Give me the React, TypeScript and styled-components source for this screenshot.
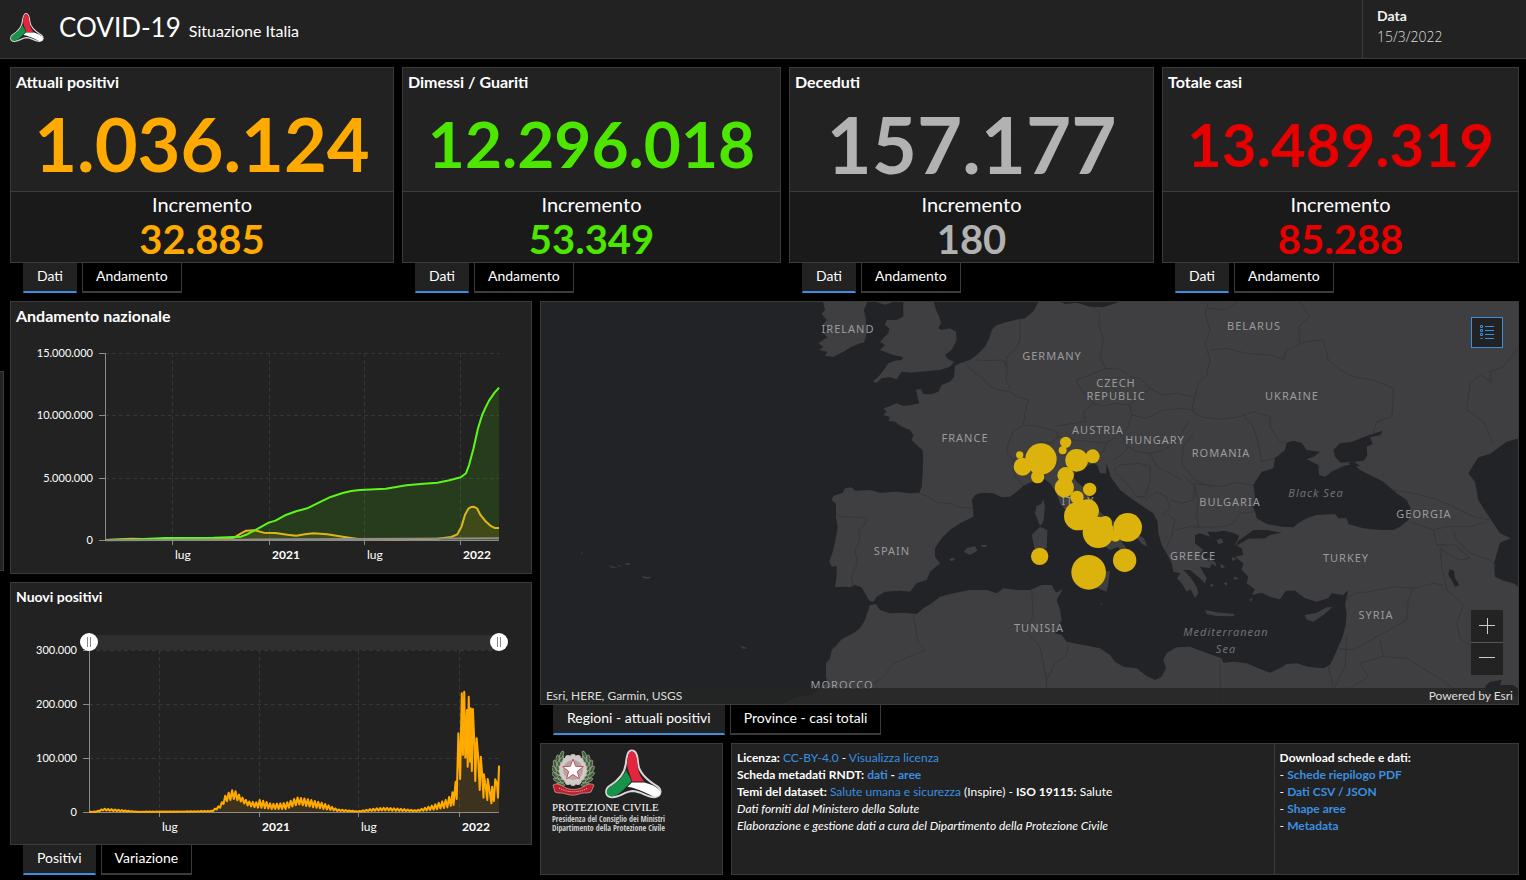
import React from "react";
import styled, { createGlobalStyle } from "styled-components";

const line = "#3b3b3b";
const panel = "#222222";
const blue = "#3a8fe0";

const Global = createGlobalStyle`
  * { box-sizing: border-box; }
  body { margin: 0; background: #000; color: #fff; font-family: Lato, "Open Sans", sans-serif; }
  h1, h2, h3, p, ul { margin: 0; padding: 0; font-weight: inherit; }
  button { font: inherit; color: inherit; cursor: pointer; }
  svg { display: block; }
`;

const Page = styled.div`
  position: relative;
  min-height: 100vh;
  display: flex;
  flex-direction: column;
`;

const Header = styled.header`
  display: flex;
  height: 59px;
  background: ${panel};
  border-bottom: 1px solid ${line};
`;

const Brand = styled.div`
  flex: 1;
  display: flex;
  align-items: center;
  gap: 15px;
  padding: 0 10px 4px;
`;

const Heading = styled.h1`
  padding-top: 3px;
  font-size: 26px;
  line-height: 32px;
  small { font-size: 16px; margin-left: 8px; }
`;

const DateBox = styled.div`
  width: 164px;
  border-left: 1px solid ${line};
  padding: 5px 14px;
  font-size: 14px;
  line-height: 21px;
  font-weight: 700;
  color: #f2f2f2;
  time { display: block; font-family: "Open Sans", sans-serif; font-weight: 300; color: #ddd; }
`;

const KpiRow = styled.section`
  display: grid;
  grid-template-columns: 384fr 379fr 365fr 357fr;
  gap: 8px;
  padding: 8px 7px 8px 10px;
`;

const Column = styled.div`
  display: flex;
  flex-direction: column;
  min-width: 0;
`;

const Panel = styled.article`
  background: ${panel};
  border: 1px solid ${line};
`;

const Title = styled.h2<{ $small?: boolean }>`
  font-size: ${(p) => (p.$small ? 14 : 16)}px;
  line-height: 18px;
  font-weight: 700;
  padding: 5px 5px 1px;
`;

const KpiTop = styled.div`
  height: 123px;
`;

const BigNumber = styled.p<{ $color: string; $size: number }>`
  color: ${(p) => p.$color};
  font-size: ${(p) => p.$size}px;
  line-height: 104px;
  height: 99px;
  font-weight: 700;
  text-align: center;
`;

const KpiBottom = styled.div<{ $color: string }>`
  height: 71px;
  background: #1a1a1a;
  border-top: 1px solid ${line};
  text-align: center;
  h3 { font-size: 20px; line-height: 24px; }
  p { font-size: 40px; line-height: 46px; font-weight: 700; color: ${(p) => p.$color}; }
`;

const TabList = styled.div`
  display: flex;
  gap: 5px;
  padding-left: 13px;
`;

const Tab = styled.button<{ $active?: boolean }>`
  position: relative;
  height: 30px;
  padding: 0 13px 3px;
  font-size: 14px;
  line-height: 24px;
  background: ${(p) => (p.$active ? panel : "#000")};
  border: 1px solid ${(p) => (p.$active ? panel : line)};
  border-top: 0;
  border-bottom: 2px solid ${(p) => (p.$active ? blue : line)};
`;

const Main = styled.main`
  flex: 1;
  display: grid;
  grid-template-columns: 522fr 979fr;
  gap: 8px;
  padding: 0 7px 5px 10px;
`;

const ChartPanel = styled(Panel)<{ $grow?: boolean }>`
  flex: ${(p) => (p.$grow ? 1 : 0)} 0 auto;
  & + & { margin-top: 8px; }
`;

const ChartSvg = styled.svg`
  width: 100%;
  height: auto;
  overflow: visible;
  font-size: 12px;
  fill: #fff;
  .value { font-size: 11px; }
  .tick { stroke: #8a8a8a; }
  .grid { stroke: #363636; stroke-dasharray: 4 3; }
  .year { font-weight: 700; }
`;

const RangeBox = styled.div`
  position: relative;
  height: 18px;
  margin: 26px 23px 0 69px;
  &::before {
    content: "";
    position: absolute;
    inset: 2px 9px 1px;
    background: #2f2f2f;
  }
`;

const Thumb = styled.input`
  position: absolute;
  inset: 0;
  width: 100%;
  height: 18px;
  margin: 0;
  appearance: none;
  background: transparent;
  pointer-events: none;
  &::-webkit-slider-thumb {
    appearance: none;
    pointer-events: auto;
    width: 18px;
    height: 18px;
    border-radius: 50%;
    background:
      linear-gradient(#888, #888) 7px 4px / 1px 10px no-repeat,
      linear-gradient(#888, #888) 10px 4px / 1px 10px no-repeat,
      #fff;
  }
`;

const MapPanel = styled(Panel)`
  position: relative;
  flex: 1 1 404px;
  min-height: 404px;
  overflow: hidden;
  background: #222327;
`;

const MapSvg = styled.svg`
  position: absolute;
  inset: 0;
  width: 100%;
  height: 100%;
  font-family: "Noto Sans", sans-serif;
  font-size: 11px;
  letter-spacing: 1px;
  fill: #9b9b9d;
  text-anchor: middle;
  .sea { font-style: italic; fill: #6f7073; }
`;

const Attribution = styled.div`
  position: absolute;
  inset: auto 0 0;
  display: flex;
  justify-content: space-between;
  padding: 0 5px;
  font-size: 12px;
  line-height: 16px;
  color: #ddd;
  background: rgba(36, 36, 36, 0.8);
`;

const LegendButton = styled.button`
  position: absolute;
  top: 15px;
  right: 15px;
  width: 32px;
  height: 31px;
  padding: 0;
  display: grid;
  place-items: center;
  background: #222;
  border: 1px solid ${blue};
`;

const ZoomBox = styled.div`
  position: absolute;
  right: 15px;
  bottom: 29px;
  display: grid;
  gap: 1px;
  background: #555;
  button {
    width: 32px;
    height: 32px;
    border: 0;
    padding: 0;
    display: grid;
    place-items: center;
    background: #232323;
  }
`;

const Footer = styled.footer`
  display: grid;
  grid-template-columns: 183fr 788fr;
  gap: 8px;
  margin-top: 8px;
  height: 132px;
`;

const LogoPanel = styled(Panel)`
  padding: 5px 11px;
`;

const LogoMarks = styled.div`
  display: flex;
  align-items: flex-start;
  gap: 10px;
`;

const LogoName = styled.div`
  font-family: "Liberation Serif", serif;
  font-size: 11px;
  line-height: 14px;
  white-space: nowrap;
  margin-top: 1px;
`;

const LogoSub = styled.div`
  font-family: "Liberation Sans Narrow", "Open Sans Condensed", "Liberation Sans", sans-serif;
  font-size: 8px;
  line-height: 9px;
  color: #ccc;
  white-space: nowrap;
`;

const InfoPanel = styled(Panel)`
  display: grid;
  grid-template-columns: 543fr 245fr;
  font-size: 12px;
  line-height: 17px;
  a { color: ${blue}; text-decoration: none; }
  ul { list-style: none; }
`;

const InfoCell = styled.div`
  padding: 5px 5px;
  & + & { border-left: 1px solid ${line}; }
`;

const SideHandle = styled.button`
  position: absolute;
  left: 0;
  top: 371px;
  width: 4px;
  height: 200px;
  padding: 0;
  background: ${panel};
  border: 1px solid ${line};
  border-left: 0;
`;

const kpis = [
  { title: "Attuali positivi", value: "1.036.124", inc: "32.885", color: "#ffaa00", size: 74 },
  { title: "Dimessi / Guariti", value: "12.296.018", inc: "53.349", color: "#4ce600", size: 64 },
  { title: "Deceduti", value: "157.177", inc: "180", color: "#b2b2b2", size: 78 },
  { title: "Totale casi", value: "13.489.319", inc: "85.288", color: "#e60000", size: 60 },
];

function Triskele({ width, height }: { width: number; height: number }) {
  return (
    <svg width={width} height={height} viewBox="182 16 170 148" aria-hidden="true">
      <path d="M262 20C250 20 247 35 244 60C241 85 225 108 195 126C181 136 182 158 202 159C224 161 240 142 265 141C290 142 310 161 330 159C351 157 352 136 338 127C310 110 284 90 281 60C279 35 275 20 262 20Z" fill="#222" stroke="#d8d8d8" strokeWidth="6" />
      <path d="M262 22C252 22 249 40 248 60C249 85 262 98 262 112L299 112C286 95 279 80 279 60C277 38 272 22 262 22Z" fill="#e4253f" />
      <path d="M245 78C238 98 215 118 195 129C183 138 185 157 202 157C228 153 244 128 260 113C260 100 249 92 245 78Z" fill="#17934a" />
      <path d="M262 115L300 115C316 119 347 131 347 146C346 156 335 159 325 156C305 148 285 134 249 128Z" fill="#fff" />
    </svg>
  );
}

function Emblem() {
  const star = Array.from({ length: 10 }, (_, i) => {
    const r = i % 2 ? 4.5 : 11;
    const a = (Math.PI / 5) * i - Math.PI / 2;
    return `${21 + r * Math.cos(a)},${21 + r * Math.sin(a)}`;
  }).join(" ");
  const teeth = Array.from({ length: 16 }, (_, i) => (Math.PI / 8) * i);
  const leaves = Array.from({ length: 13 }, (_, i) => 0.7 + i * 0.15);
  return (
    <svg width="43" height="48" viewBox="0 0 43 48" aria-hidden="true">
      {teeth.map((a) => (
        <circle key={a} cx={21 + 13 * Math.cos(a)} cy={21 + 13 * Math.sin(a)} r="3" fill="#cfc8c6" />
      ))}
      <circle cx="21" cy="21" r="13" fill="#d2cbc9" />
      <circle cx="21" cy="21" r="10" fill="#b3a3a1" />
      {[-1, 1].map((s) =>
        leaves.map((t, i) => {
          const a = Math.PI / 2 + s * t;
          const r = i % 2 ? 16 : 19;
          const x = 21 + r * Math.cos(a);
          const y = 21 + r * Math.sin(a);
          return (
            <g key={`${s}${t}`} transform={`translate(${x} ${y}) rotate(${(a * 180) / Math.PI + 60 * s})`}>
              <ellipse rx="4" ry="1.6" fill="#3f5f38" stroke="#b5bfa9" strokeWidth="0.6" />
            </g>
          );
        })
      )}
      <polygon points={star} fill="#fff" stroke="#c6525c" strokeWidth="1" />
      <path d="M1 36C6 33 10 37 14 39C19 41 24 41 29 39C33 37 37 33 42 36L39 43C34 45 31 43 27 45C22 47 18 46 14 45C10 43 7 45 3 43Z" fill="#b8202d" stroke="#e5a5a5" strokeWidth="0.7" />
      <path d="M7 39C16 44 27 44 36 39" stroke="#f0c4c4" strokeWidth="1" strokeDasharray="1 1" fill="none" />
    </svg>
  );
}

type AxisProps = {
  left: number;
  bottom: number;
  ys: [number, string][];
  xs: [number, string][];
};

function Axes({ left, bottom, ys, xs }: AxisProps) {
  return (
    <g>
      {xs.map(([x]) => (
        <line key={x} className="grid" x1={x + 0.5} x2={x + 0.5} y1={ys[0][0]} y2={bottom} />
      ))}
      {ys.slice(0, -1).map(([y]) => (
        <line key={y} className="grid" x1={left} x2="488" y1={y + 0.5} y2={y + 0.5} />
      ))}
      {ys.map(([y, label]) => (
        <g key={label}>
          <line className="tick" x1={left - 6} x2={left} y1={y + 0.5} y2={y + 0.5} />
          <text className="value" x={left - 12} y={y + 4} textAnchor="end">{label}</text>
        </g>
      ))}
      {xs.map(([x, label]) => (
        <g key={x}>
          <line className="tick" x1={x + 0.5} x2={x + 0.5} y1={bottom} y2={bottom + 5} />
          <text x={x + 3} y={bottom + 19} className={label === "lug" ? "" : "year"}>{label}</text>
        </g>
      ))}
      <line className="tick" x1={left + 0.5} x2={left + 0.5} y1={ys[0][0]} y2={bottom} />
      <line className="tick" x1={left} x2="488" y1={bottom + 0.5} y2={bottom + 0.5} />
    </g>
  );
}

const healed = "307,720 400,718 480,714 620,713 700,710 720,702 745,688 780,668 800,662 830,645 860,634 895,624 930,606 960,591 995,579 1020,573 1045,570 1120,566 1180,556 1230,551 1270,548 1305,541 1338,532 1353,520 1362,495 1375,445 1388,385 1400,345 1410,322 1420,302 1436,278 1449,263";
const current = "307,720 380,716 450,718 620,718 680,713 700,700 715,692 740,691 765,698 800,699 835,704 860,707 885,703 910,700 950,703 1000,711 1040,717 1150,718 1270,716 1310,711 1328,703 1340,680 1350,645 1360,626 1368,621 1375,620 1385,625 1395,645 1410,664 1425,678 1436,684 1449,684";

function NationalChart() {
  return (
    <ChartSvg viewBox="0 0 520 247" role="img" aria-label="Andamento nazionale">
      <Axes
        left={94}
        bottom={214}
        ys={[[27, "15.000.000"], [89, "10.000.000"], [152, "5.000.000"], [214, "0"]]}
        xs={[[161, "lug"], [258, "2021"], [353, "lug"], [449, "2022"]]}
      />
      <g transform="translate(-11 -26) scale(0.3444 0.3333)" strokeWidth="6" strokeLinejoin="round">
        <polygon points={`${current} 1449,720 307,720`} fill="#ffaa00" fillOpacity="0.13" />
        <polyline points={current} fill="none" stroke="#f0b020" />
        <polygon points={`${healed} 1449,720 307,720`} fill="#4ce600" fillOpacity="0.13" />
        <polyline points={healed} fill="none" stroke="#5cf51c" />
        <polyline points="307,721 700,719 1449,715" fill="none" stroke="#8c8c8c" />
      </g>
    </ChartSvg>
  );
}

const envelope = [
  [259, 711, 711], [280, 709, 711], [300, 701, 706], [330, 703, 708], [400, 710, 711], [560, 709, 710],
  [615, 707, 710], [640, 690, 698], [655, 660, 680], [678, 643, 672], [700, 665, 680], [720, 679, 692],
  [745, 682, 698], [755, 674, 698], [790, 687, 702], [830, 684, 702], [865, 667, 688], [900, 674, 695],
  [940, 685, 702], [980, 703, 708], [1040, 709, 710], [1075, 702, 708], [1120, 698, 706], [1160, 701, 708],
  [1210, 706, 709], [1260, 690, 704], [1300, 672, 697], [1315, 650, 690],
];

function weeklySeries() {
  const pts: string[] = [];
  for (let x = 259, i = 0; x < 1315; x += 5, i++) {
    const k = envelope.findIndex((e) => e[0] > x);
    const a = envelope[k - 1];
    const b = envelope[k];
    const t = (x - a[0]) / (b[0] - a[0]);
    const c = i % 2 ? 1 : 2;
    pts.push(`${x},${a[c] + (b[c] - a[c]) * t}`);
  }
  return pts.join(" ");
}

const newCases = `${weeklySeries()} 1317,690 1323,620 1326,672 1331,475 1336,612 1341,355 1344,540 1348,350 1351,548 1356,405 1358,575 1361,365 1365,560 1367,400 1370,588 1373,402 1378,520 1380,618 1384,490 1388,540 1393,645 1396,545 1400,600 1404,668 1405,598 1411,640 1415,675 1416,612 1422,650 1427,685 1429,635 1434,678 1438,613 1443,625 1446,668 1449,572`;

function DailyChart() {
  return (
    <ChartSvg viewBox="0 0 520 192" role="img" aria-label="Nuovi positivi">
      <Axes
        left={78}
        bottom={161}
        ys={[[-1, "300.000"], [53, "200.000"], [107, "100.000"], [161, "0"]]}
        xs={[[148, "lug"], [248, "2021"], [347, "lug"], [448, "2022"]]}
      />
      <g transform="translate(-11 -76) scale(0.3444 0.3333)" strokeLinejoin="round">
        <polygon points={`${newCases} 1449,712 259,712`} fill="#ffaa00" fillOpacity="0.12" />
        <polyline points={newCases} fill="none" stroke="#ffaa00" strokeWidth="6" />
      </g>
    </ChartSvg>
  );
}

const coastWest = "1495,6 1480,34 1455,55 1425,60 1400,66 1370,75 1355,90 1350,110 1335,140 1310,165 1290,180 1260,190 1245,198 1242,230 1230,245 1205,255 1195,275 1175,283 1150,282 1142,268 1128,268 1132,290 1138,310 1115,315 1090,318 1070,310 1045,320 1030,325 1040,335 1030,345 1050,352 1045,362 1065,365 1085,380 1110,390 1120,405 1115,420 1130,435 1148,450 1150,475 1148,520 1145,560 1138,578 1110,580 1070,575 1020,578 990,570 945,572 935,562 915,565 908,578 880,588 875,600 888,612 888,650 893,680 888,710 880,750 868,785 876,800 890,798 890,830 885,862 910,860 930,862 945,855 965,862 975,880 988,902 1000,905 1010,890 1035,875 1080,872 1110,875 1130,850 1160,840 1170,815 1200,790 1185,770 1185,745 1205,715 1230,690 1260,670 1300,650 1300,630 1295,600 1305,585 1325,578 1360,580 1385,592 1410,590 1430,575 1450,558 1475,545 1490,548 1510,535";
const coastItaly = "1530,550 1550,580 1560,610 1580,635 1610,670 1650,700 1680,730 1710,750 1735,740 1750,770 1740,812 1760,810 1775,785 1760,745 1745,725 1780,705 1810,735 1822,738 1812,715 1770,690 1730,670 1695,650 1680,635 1655,600 1640,570 1610,545 1600,530 1610,510 1640,498 1660,490 1672,495 1680,520 1698,520 1700,490 1712,530 1740,570 1780,600 1810,620 1840,640 1853,665 1855,700 1865,735 1880,760 1895,790 1900,815 1922,820 1910,835 1925,850 1940,875 1952,868 1965,895 1975,880 1970,860 1950,830 1930,810 1950,810 1980,835 1995,850 2000,835 1980,800 2010,805 2015,790 1980,762 1990,750 1965,730 1965,705 1980,700 2010,710 2002,695 2030,695 2055,692 2082,700 2098,708 2085,735";
const coastEast = "2105,745 2110,765 2085,770 2110,790 2105,810 2125,830 2120,850 2145,868 2135,885 2165,878 2190,890 2220,898 2238,872 2265,872 2295,895 2330,905 2365,895 2375,880 2410,885 2425,870 2420,890 2415,915 2420,940 2417,975 2408,1010 2395,1040 2382,1070 2370,1095 2350,1105 2305,1100 2270,1090 2240,1092 2220,1105 2190,1118 2155,1105 2120,1090 2080,1085 2050,1088 2045,1075 1990,1055 1950,1040 1910,1042 1880,1060 1870,1080 1878,1105 1865,1130 1845,1140 1820,1128 1790,1105 1750,1100 1725,1085 1710,1065 1680,1045 1630,1035 1580,1025 1565,1005 1545,1000 1552,985 1565,960 1560,930 1550,900 1568,868 1548,878 1535,855 1505,855 1470,870 1430,870 1390,865 1370,880 1340,870 1290,870 1240,880 1200,890 1175,910 1150,925 1130,942 1090,938 1050,940 1020,930 1008,912 990,915 985,930 975,960 960,985 940,1000 905,1018 890,1035 875,1050 870,1075 858,1090 858,1130 862,1145 840,1165 815,1185 765,1192 720,1215 720,1300 3000,1300 3000,0 1495,0";

const islands = [
  "848,0 855,30 845,42 860,60 848,75 870,85 850,100 862,112 835,130 850,140 838,150 862,155 855,168 880,170 905,158 935,140 960,130 972,128 980,100 978,60 972,30 985,0",
  "990,0 1035,14 1055,8 1060,0 1090,0 1090,50 1070,60 1040,60 1035,75 1048,85 1045,100 1030,115 1020,125 1035,135 1020,150 1045,160 1060,165 1090,172 1085,180 1065,182 1045,190 1035,205 1020,225 998,245 1010,248 1025,235 1050,232 1070,238 1085,215 1110,218 1140,215 1175,212 1200,210 1230,200 1242,185 1225,178 1215,165 1235,150 1250,120 1248,95 1230,85 1205,90 1195,85 1203,70 1198,50 1188,30 1180,0",
  "1510,598 1515,620 1510,665 1500,678 1485,640 1490,618 1503,612",
  "1500,680 1522,690 1520,745 1485,752 1475,705",
  "1620,808 1660,825 1710,812 1705,850 1700,875 1680,868 1640,848 1615,830",
  "1280,745 1305,738 1312,752 1290,765 1272,755",
  "1320,735 1338,735 1342,741 1328,741",
  "1228,778 1238,773 1246,778 1234,784",
  "1995,930 2030,937 2085,942 2080,949 2030,948 2000,942",
  "2295,945 2330,938 2360,922 2378,921 2350,945 2320,965 2298,958",
  "205,795 220,800 235,803 215,803", "228,792 246,800 238,800", "255,790 270,789 268,794 258,794",
  "305,828 320,831 335,830 325,836 310,834", "600,1038 612,1040 622,1045 610,1046", "122,758 128,757 127,762",
  "1680,912 1686,910 1688,914",
  "2030,720 2045,715 2050,728 2035,732", "2075,770 2090,778 2078,784", "2040,790 2056,800 2044,806", "2000,770 2025,785 2030,800 2012,790", "2050,850 2062,846 2060,858", "2128,900 2136,892 2134,906", "2010,850 2022,856 2014,862", "2080,830 2098,834 2084,840",
];

const seas = [
  "2140,555 2165,515 2200,505 2205,475 2235,450 2240,428 2260,422 2285,428 2300,450 2340,455 2325,468 2300,478 2335,495 2337,525 2355,530 2375,515 2410,498 2440,492 2460,510 2490,525 2530,545 2570,580 2600,600 2612,625 2605,660 2580,680 2560,690 2520,690 2470,685 2425,672 2420,655 2395,655 2385,642 2330,645 2300,655 2275,670 2260,682 2225,680 2180,672 2150,655 2145,635 2138,620 2145,590",
  "2380,450 2400,430 2435,425 2480,408 2510,398 2528,392 2522,405 2490,412 2498,432 2480,440 2482,465 2472,482 2440,485 2402,488 2385,470",
  "2425,490 2440,484 2460,498 2440,500",
  "2120,705 2140,690 2180,690 2225,698 2190,705 2175,715 2125,716 2085,740 2095,722",
  "3000,395 2970,405 2900,425 2850,462 2815,472 2785,520 2805,545 2815,600 2840,640 2880,700 2912,715 2880,728 2862,790 2865,830 2890,842 2920,850 3000,905",
  "2728,808 2742,812 2745,835 2758,855 2745,860 2735,840 2725,825",
  "1550,0 1575,12 1610,8 1650,20 1690,22 1730,8 1740,0",
  "2835,1160 2850,1145 2885,1140 2880,1155 2920,1155 2945,1175 2940,1190 2880,1185 2850,1180",
];

const borders = [
  "1138,580 1165,590 1190,608 1230,610 1260,622 1300,625", "888,640 900,650 960,652 982,655 970,680 955,690 960,720 945,750 952,790 935,830 940,858",
  "1275,190 1300,215 1330,235 1345,255 1375,270 1410,275 1430,290 1465,300 1455,340 1450,375 1420,395 1405,430 1400,460 1420,480 1425,530 1450,555",
  "1310,180 1345,182 1390,180 1402,205 1398,240 1412,270", "1440,60 1440,120 1425,150 1400,170 1400,205", "1450,375 1490,378 1515,385 1550,395 1555,412 1530,430 1500,425 1470,450 1420,480",
  "1550,378 1600,370 1635,365 1632,335 1660,310 1625,270 1608,240 1650,225 1695,205 1682,170 1690,120 1675,70 1680,40 1660,20", "1695,205 1740,208 1770,230 1800,235 1830,265 1805,285 1770,315 1725,310 1690,318 1660,310", "1830,265 1870,285 1910,280 1960,290",
  "1770,315 1775,345 1765,380 1740,400 1700,430 1650,425 1600,420 1555,412", "1775,345 1820,355 1870,330 1925,325 1960,330", "1740,400 1765,440 1790,455 1830,460 1870,450 1910,425 1945,365",
  "1700,430 1690,455 1665,470 1655,490", "1720,480 1750,460 1765,440", "1720,510 1740,495 1800,490 1830,500 1830,545 1815,590 1790,590 1760,550 1720,510", "1830,460 1850,500 1890,520 1925,540", "1815,600 1850,575 1880,590 1890,625 1865,645", "1890,600 1925,610 1960,600 1965,560 1935,530",
  "1880,640 1905,660 1895,710 1880,740", "1905,690 1950,680 2000,682 2050,680 2080,670 2100,640 2145,635", "1960,550 2040,560 2090,548 2140,555", "1960,550 1975,600 1970,640 1975,680",
  "2005,6 1995,40 2010,90 1995,130 2010,180 2000,225 1975,250 1965,290 1955,330 1980,350 2040,358 2100,350 2140,335 2190,350 2190,380 2220,425 2240,430", "2010,150 2060,145 2120,160 2190,165 2230,178 2240,150 2300,125 2350,120 2365,180 2400,210 2440,230 2500,240 2560,265 2560,300 2555,350 2510,365 2500,400",
  "2280,6 2310,50 2275,80 2280,130", "2000,25 2060,30 2090,6", "2105,340 2140,380 2155,430 2165,485 2205,475", "1960,400 1930,440 1925,490 1965,540 2010,560",
  "2560,570 2620,580 2680,595 2740,620 2800,650 2850,660", "2610,665 2680,690 2720,680 2790,680 2840,665", "2680,690 2690,735 2745,735 2790,775 2760,780 2720,760 2700,745", "2700,745 2705,800 2720,870 2770,915 2750,970 2760,1015 2810,1050", "2740,690 2750,720 2790,760 2850,780 2870,800",
  "2420,900 2440,880 2490,875 2560,860 2620,865 2680,850 2710,855", "2620,865 2605,900 2600,960 2520,1005 2440,1050 2400,1045", "2520,1020 2530,1070 2600,1075 2690,1130 2740,1165", "2525,1070 2460,1090 2485,1130 2430,1165 2400,1165", "2420,1010 2415,1100 2390,1150 2370,1200", "2040,1088 2042,1215", "2365,1100 2380,1160",
  "1475,870 1480,950 1450,990 1500,1040 1520,1140 1515,1212", "1585,1035 1580,1065 1545,1090 1520,1140", "1120,945 1135,1030 1155,1050 1060,1090 1030,1130 980,1165", "2930,150 2890,200 2850,215 2855,245 2820,225 2790,250 2780,330 2830,365 2860,430",
];

const bubbles = [
  [1503, 477, 47], [1448, 500, 27], [1439, 465, 11], [1493, 530, 20], [1577, 427, 17], [1568, 451, 12], [1610, 481, 34],
  [1658, 469, 21], [1577, 526, 25], [1573, 563, 29], [1649, 568, 20], [1611, 592, 20], [1643, 632, 34], [1615, 648, 43],
  [1675, 697, 47], [1696, 668, 20], [1763, 682, 43], [1726, 708, 17], [1499, 769, 26], [1754, 781, 35], [1646, 817, 52],
];

const labels: [string, number, number, boolean?][] = [
  ["IRELAND", 307, 31], ["GERMANY", 511, 58], ["CZECH", 575, 85], ["REPUBLIC", 575, 98], ["AUSTRIA", 557, 132],
  ["FRANCE", 424, 140], ["HUNGARY", 614, 142], ["ROMANIA", 680, 155], ["UKRAINE", 751, 98], ["BELARUS", 713, 28],
  ["BULGARIA", 689, 204], ["GEORGIA", 883, 216], ["GREECE", 652, 258], ["TURKEY", 805, 260], ["SYRIA", 835, 317],
  ["SPAIN", 351, 253], ["TUNISIA", 498, 330], ["MOROCCO", 301, 387], ["ITALY", 537, 203],
  ["Black Sea", 775, 195, true], ["Mediterranean", 685, 334, true], ["Sea", 685, 351, true],
];

function EuropeMap() {
  return (
    <MapSvg viewBox="0 0 977 402" preserveAspectRatio="xMidYMid slice" role="img" aria-label="Mappa regioni">
      <g transform="translate(-1 -2) scale(0.33333)">
        <g fill="#3f3f41">
          <polygon points={`${coastWest} ${coastItaly} ${coastEast}`} />
          {islands.map((p) => <polygon key={p} points={p} />)}
        </g>
        <g fill="#222327">
          {seas.map((p) => <polygon key={p} points={p} />)}
        </g>
        <g fill="none" stroke="#353537" strokeWidth="3" strokeLinejoin="round">
          {borders.map((p) => <polyline key={p} points={p} />)}
        </g>
      </g>
      {labels.map(([name, x, y, sea]) => (
        <text key={name} x={x} y={y} className={sea ? "sea" : ""}>{name}</text>
      ))}
      <g transform="translate(-1 -2) scale(0.33333)" fill="#dcb20c">
        {bubbles.map(([x, y, r]) => <circle key={`${x}-${y}`} cx={x} cy={y} r={r} />)}
      </g>
    </MapSvg>
  );
}

function Tabs({ items }: { items: string[] }) {
  return (
    <TabList role="tablist">
      {items.map((t, i) => (
        <Tab key={t} role="tab" aria-selected={i === 0} $active={i === 0}>{t}</Tab>
      ))}
    </TabList>
  );
}

export default function App() {
  return (
    <Page>
      <Global />
      <Header>
        <Brand>
          <Triskele width={34} height={31} />
          <Heading>COVID-19<small>Situazione Italia</small></Heading>
        </Brand>
        <DateBox>Data<time dateTime="2022-03-15">15/3/2022</time></DateBox>
      </Header>
      <KpiRow>
        {kpis.map((k) => (
          <Column key={k.title}>
            <Panel>
              <KpiTop>
                <Title>{k.title}</Title>
                <BigNumber $color={k.color} $size={k.size}>{k.value}</BigNumber>
              </KpiTop>
              <KpiBottom $color={k.color}>
                <h3>Incremento</h3>
                <p>{k.inc}</p>
              </KpiBottom>
            </Panel>
            <Tabs items={["Dati", "Andamento"]} />
          </Column>
        ))}
      </KpiRow>
      <Main>
        <Column>
          <ChartPanel>
            <Title>Andamento nazionale</Title>
            <NationalChart />
          </ChartPanel>
          <ChartPanel $grow>
            <Title $small>Nuovi positivi</Title>
            <RangeBox>
              <Thumb type="range" min="0" max="750" defaultValue="0" aria-label="Data iniziale" />
              <Thumb type="range" min="0" max="750" defaultValue="750" aria-label="Data finale" />
            </RangeBox>
            <DailyChart />
          </ChartPanel>
          <Tabs items={["Positivi", "Variazione"]} />
        </Column>
        <Column>
          <MapPanel>
            <EuropeMap />
            <LegendButton aria-label="Legenda">
              <svg width="16" height="16" viewBox="0 0 16 16" fill="none" stroke={blue}>
                <path d="M6 1.5h9M6 5.5h9M6 9.5h9M6 13.5h9" />
                <path d="M1.5 .5h2v2h-2zM1.5 4.5h2v2h-2zM1.5 8.5h2v2h-2zM1.5 13.5h2" />
              </svg>
            </LegendButton>
            <ZoomBox>
              <button aria-label="Ingrandisci">
                <svg width="16" height="16" stroke="#ccc"><path d="M0 7.5h16M8.5 0v16" /></svg>
              </button>
              <button aria-label="Riduci">
                <svg width="16" height="16" stroke="#ccc"><path d="M0 6.5h16" /></svg>
              </button>
            </ZoomBox>
            <Attribution><span>Esri, HERE, Garmin, USGS</span><span>Powered by Esri</span></Attribution>
          </MapPanel>
          <Tabs items={["Regioni - attuali positivi", "Province - casi totali"]} />
          <Footer>
            <LogoPanel>
              <LogoMarks><Emblem /><Triskele width={57} height={50} /></LogoMarks>
              <LogoName>PROTEZIONE CIVILE</LogoName>
              <LogoSub>Presidenza del Consiglio dei Ministri</LogoSub>
              <LogoSub>Dipartimento della Protezione Civile</LogoSub>
            </LogoPanel>
            <InfoPanel>
              <InfoCell>
                <p><b>Licenza:</b> <a href="#licenza">CC-BY-4.0</a> - <a href="#visualizza">Visualizza licenza</a></p>
                <p><b>Scheda metadati RNDT: <a href="#dati">dati</a> - <a href="#aree">aree</a></b></p>
                <p><b>Temi del dataset:</b> <a href="#temi">Salute umana e sicurezza</a> (Inspire) - <b>ISO 19115:</b> Salute</p>
                <p><i>Dati forniti dal Ministero della Salute</i></p>
                <p><i>Elaborazione e gestione dati a cura del Dipartimento della Protezione Civile</i></p>
              </InfoCell>
              <InfoCell>
                <b>Download schede e dati:</b>
                <ul>
                  <li>- <a href="#pdf"><b>Schede riepilogo PDF</b></a></li>
                  <li>- <a href="#csv"><b>Dati CSV / JSON</b></a></li>
                  <li>- <a href="#shape"><b>Shape aree</b></a></li>
                  <li>- <a href="#metadata"><b>Metadata</b></a></li>
                </ul>
              </InfoCell>
            </InfoPanel>
          </Footer>
        </Column>
      </Main>
      <SideHandle aria-label="Apri pannello" />
    </Page>
  );
}
